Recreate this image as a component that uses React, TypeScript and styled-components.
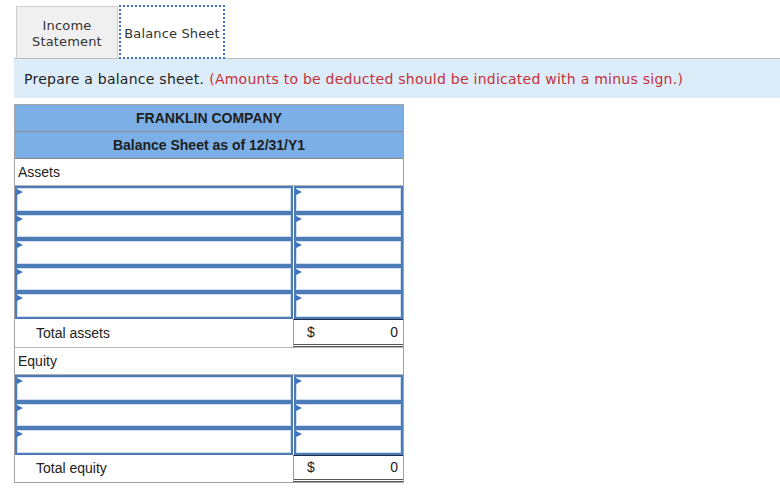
import React from "react";
import styled, { createGlobalStyle } from "styled-components";

const GlobalStyle = createGlobalStyle`
  html, body {
    margin: 0;
    padding: 0;
    background: #ffffff;
  }
`

const Page = styled.div`
  padding: 5px 0 0 14px;
  font-family: "DejaVu Sans", Verdana, sans-serif;
  color: #333;
`

const Tabs = styled.div`
  display: flex;
  align-items: flex-end;
  margin-left: 2px;
  height: 53px;
`

const Tab = styled.div<{ active?: boolean }>`
  box-sizing: border-box;
  display: flex;
  align-items: center;
  justify-content: center;
  text-align: center;
  padding-top: 2px;
  font-size: 13px;
  line-height: 16px;
  letter-spacing: 0.15px;
  color: #333;
  ${(p) => p.active ? `
    width: 106px;
    height: 54px;
    margin-left: 1px;
    margin-bottom: -1px;
    padding-top: 3px;
    background: #fff;
    border: 2px dotted #3a6fc4;
    position: relative;
    z-index: 1;
  ` : `
    width: 102px;
    height: 52px;
    background: #f0f0f0;
    border: 1px solid #cfcfcf;
    border-bottom: none;
  `}
`

const Instructions = styled.div`
  box-sizing: border-box;
  height: 40px;
  display: flex;
  align-items: center;
  padding-left: 10px;
  background: #dcedf9;
  border-top: 1px solid #bdbdbd;
  font-size: 14px;
  letter-spacing: 0.25px;
  color: #222;
`

const Note = styled.span`
  color: #c3313a;
  margin-left: 5px;
`

const Sheet = styled.div`
  box-sizing: border-box;
  width: 390px;
  margin-top: 6px;
  border: 1px solid #a3a3a3;
  font-family: "Liberation Sans", Arial, sans-serif;
  font-size: 14px;
  color: #222;
`

const Header = styled.div`
  height: 26px;
  display: flex;
  align-items: center;
  justify-content: center;
  background: #7bafe6;
  border-bottom: 1px solid #8c8c8c;
  font-weight: bold;
  color: #1e1e1e;
`

const Section = styled.div`
  height: 26px;
  display: flex;
  align-items: center;
  padding-left: 3px;
  border-bottom: 1px solid #b5b5b5;
`

const Row = styled.div<{ h: number }>`
  display: flex;
  height: ${(p) => p.h}px;
`

const LabelCell = styled.div<{ indent?: number }>`
  width: 278px;
  display: flex;
  align-items: center;
  padding-left: ${(p) => p.indent || 0}px;
  box-sizing: border-box;
`

const ValueCell = styled.div`
  width: 110px;
  box-sizing: border-box;
  padding-left: 1px;
`

const TotalValue = styled.div`
  width: 110px;
  box-sizing: border-box;
  display: flex;
  align-items: center;
  justify-content: space-between;
  padding: 0 5px 0 13px;
  border-left: 1px solid #9c9c9c;
  border-top: 1px solid #1c2f4a;
  border-bottom: 3px double #555;
`

const TotalRow = styled(Row)`
  border-bottom: 1px solid #b5b5b5;
`

const Field = styled.div`
  position: relative;
  width: 100%;
  height: 100%;
  box-sizing: border-box;
  border: 2px solid #4d7bb6;
  box-shadow: inset 0 0 0 1px #cfdff1;
  background: #fff;
`

const Marker = styled.span`
  position: absolute;
  left: 0;
  top: 1px;
  width: 0;
  height: 0;
  border-top: 3px solid transparent;
  border-bottom: 3px solid transparent;
  border-left: 6px solid #3b74c4;
`

const Input = styled.input`
  width: 100%;
  height: 100%;
  box-sizing: border-box;
  border: none;
  outline: none;
  background: transparent;
  padding: 0 4px;
  font: inherit;
`

const InputRow: React.FunctionComponent<{ h: number }> = ({ h }) => {
  return <Row h={h}>
    <LabelCell>
      <Field><Marker /><Input /></Field>
    </LabelCell>
    <ValueCell>
      <Field><Marker /><Input /></Field>
    </ValueCell>
  </Row>
}

const Total: React.FunctionComponent<{ label: string, h: number }> = ({ label, h }) => {
  return <TotalRow h={h}>
    <LabelCell indent={21}>{label}</LabelCell>
    <TotalValue><span>$</span><span>0</span></TotalValue>
  </TotalRow>
}

const App: React.FunctionComponent = () => {
  const assetRows = [26.6, 26.6, 26.6, 26.6, 26.6]
  const equityRows = [26.6, 26.6, 26.6]

  return <>
    <GlobalStyle />
    <Page>
      <Tabs>
        <Tab>Income<br />Statement</Tab>
        <Tab active>Balance Sheet</Tab>
      </Tabs>
      <Instructions>
        Prepare a balance sheet.
        <Note>(Amounts to be deducted should be indicated with a minus sign.)</Note>
      </Instructions>
      <Sheet>
        <Header>FRANKLIN COMPANY</Header>
        <Header>Balance Sheet as of 12/31/Y1</Header>
        <Section>Assets</Section>
        {assetRows.map((h, i) => <InputRow key={"a" + i} h={h} />)}
        <Total label="Total assets" h={28} />
        <Section>Equity</Section>
        {equityRows.map((h, i) => <InputRow key={"e" + i} h={h} />)}
        <Row h={27}>
          <LabelCell indent={21}>Total equity</LabelCell>
          <TotalValue><span>$</span><span>0</span></TotalValue>
        </Row>
      </Sheet>
    </Page>
  </>
}

export default App
